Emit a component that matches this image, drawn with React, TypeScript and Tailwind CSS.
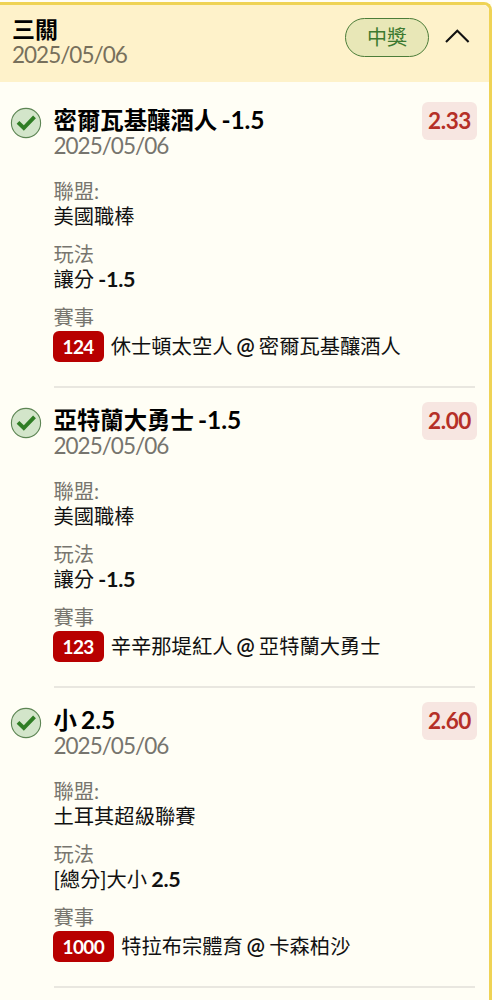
type Leg = {
  pick: string;
  pickLine: string;
  date: string;
  odds: string;
  league: string;
  market: string;
  line: string;
  code: string;
  away: string;
  home: string;
};

const legs: Leg[] = [
  {
    pick: "密爾瓦基釀酒人",
    pickLine: "-1.5",
    date: "2025/05/06",
    odds: "2.33",
    league: "美國職棒",
    market: "讓分",
    line: "-1.5",
    code: "124",
    away: "休士頓太空人",
    home: "密爾瓦基釀酒人",
  },
  {
    pick: "亞特蘭大勇士",
    pickLine: "-1.5",
    date: "2025/05/06",
    odds: "2.00",
    league: "美國職棒",
    market: "讓分",
    line: "-1.5",
    code: "123",
    away: "辛辛那堤紅人",
    home: "亞特蘭大勇士",
  },
  {
    pick: "小",
    pickLine: "2.5",
    date: "2025/05/06",
    odds: "2.60",
    league: "土耳其超級聯賽",
    market: "[總分]大小",
    line: "2.5",
    code: "1000",
    away: "特拉布宗體育",
    home: "卡森柏沙",
  },
];

function WonIcon() {
  return (
    <svg className="h-8 w-8 shrink-0" viewBox="0 0 32 32" aria-hidden="true">
      <circle cx="16" cy="16" r="14.6" fill="#d3e5ca" stroke="#5d8554" strokeWidth="1.1" />
      <path d="M8 15.4L13.8 21L24.5 9.8" fill="none" stroke="#2f7d24" strokeWidth="3.9" />
    </svg>
  );
}

function LegRow({ leg }: { leg: Leg }) {
  return (
    <li className="flex h-[300px] pl-[10px] pr-[14px]">
      <div className="w-[43.5px] shrink-0 pt-[19px]">
        <WonIcon />
      </div>
      <div className="min-w-0 flex-1 border-b-2 border-[#e9e7e0]">
        <div className="flex items-start justify-between">
          <div className="pt-[19px]">
            <h3 className="text-[23.4px] font-bold leading-[26px] text-black">
              {leg.pick} <span className="-ml-[1.5px] text-[24.5px] leading-none tracking-[-0.1px]">{leg.pickLine}</span>
            </h3>
            <p className="pt-px text-[22.5px] leading-[23px] tracking-[-1px] text-[#77756e]">{leg.date}</p>
          </div>
          <span className="-mr-0.5 mt-[14px] h-[38px] w-[55px] rounded-md bg-[#f7e6e1] text-center text-[22.5px] font-bold leading-[38px] tracking-[-0.4px] text-[#b52f27]">
            {leg.odds}
          </span>
        </div>

        <dl className="mt-[21px] flex flex-col gap-3 whitespace-nowrap text-[20.3px]">
          <div>
            <dt className="leading-[26px] text-[#77756e]">聯盟:</dt>
            <dd className="leading-[25px]">{leg.league}</dd>
          </div>
          <div>
            <dt className="leading-[26px] text-[#77756e]">玩法</dt>
            <dd className="h-[25px] leading-[25px]">
              {leg.market} <b className="-ml-px text-[21.5px] font-bold leading-none tracking-[-0.3px]">{leg.line}</b>
            </dd>
          </div>
          <div>
            <dt className="leading-[26px] text-[#77756e]">賽事</dt>
            <dd className="-ml-px mt-px flex items-center gap-[7px] leading-[28px]">
              <span className="h-[31px] rounded-md bg-[#b80000] px-2.5 text-[19px] font-bold leading-[31px] tracking-[-0.6px] text-white">
                {leg.code}
              </span>
              <span className="-mt-px">
                {leg.away} <span className="-ml-[1.5px] -mr-px text-[22px] font-semibold leading-none">@</span> {leg.home}
              </span>
            </dd>
          </div>
        </dl>
      </div>
    </li>
  );
}

export default function App() {
  return (
    <main className="h-[1000px] overflow-hidden bg-[#fffef7] pt-0.5 font-['Lato','Noto_Sans_CJK_TC',sans-serif] text-[#111]">
      <section className="h-[1010px] rounded-tr-lg border-r-3 border-t-3 border-[#efd355] bg-[#fffef5]">
        {/* Ticket header */}
        <header className="flex h-[77px] items-start rounded-tr-md bg-[#fef2ca] pl-3 pr-[19px]">
          <div className="flex-1 pt-[11px]">
            <h2 className="text-[23px] font-bold leading-[26px] text-black">三關</h2>
            <p className="pt-px text-[22.5px] leading-6 tracking-[-1px] text-[#77705c]">2025/05/06</p>
          </div>
          <span className="mt-[13px] h-[39px] w-[84px] rounded-full border border-[#4c7d39] bg-[#e8e7b7] text-center text-[20px] leading-[37px] text-[#3d7a30]">
            中獎
          </span>
          <svg className="ml-4 mt-6 h-[14px] w-[25px]" viewBox="0 0 25 14" fill="none" aria-hidden="true">
            <path d="M1 13L12.3 1.8L23.6 13" stroke="#111" strokeWidth="2.1" />
          </svg>
        </header>

        <ul className="pt-[6px]">
          {legs.map((leg) => (
            <LegRow key={leg.code} leg={leg} />
          ))}
        </ul>
      </section>
    </main>
  );
}
